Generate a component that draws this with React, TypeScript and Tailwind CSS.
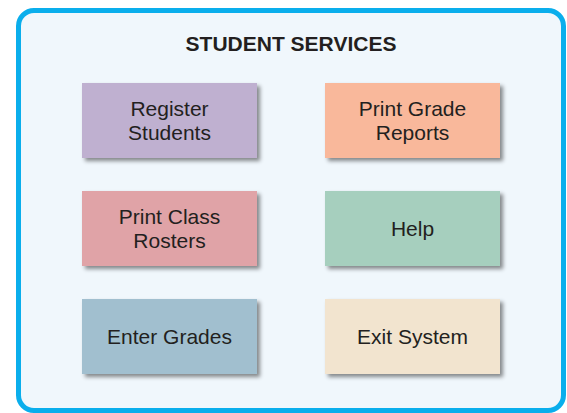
import React from "react";

const buttons: { label: string[]; bg: string }[] = [
  { label: ["Register", "Students"], bg: "bg-[#bfb0d0]" },
  { label: ["Print Grade", "Reports"], bg: "bg-[#f9b89b]" },
  { label: ["Print Class", "Rosters"], bg: "bg-[#e0a3a7]" },
  { label: ["Help"], bg: "bg-[#a6cfbe]" },
  { label: ["Enter Grades"], bg: "bg-[#a1bfcf]" },
  { label: ["Exit System"], bg: "bg-[#f2e4cf]" },
];

export default function App() {
  return (
    <div className="w-[567px] h-[413px] bg-white pt-2 pl-4" style={{ fontFamily: '"Liberation Sans", Arial, sans-serif' }}>
      <div className="w-[550px] h-[405px] rounded-[18px] border-[5px] border-[#0aaeec] bg-[#f0f7fc] flex flex-col items-center pt-[19px]">
        <div className="text-[21px] leading-[24px] font-bold text-[#231f20]">STUDENT SERVICES</div>
        <div className="mt-[27px] grid grid-cols-[175px_175px] auto-rows-[75px] gap-x-[68px] gap-y-[33px]">
          {buttons.map((b) => (
            <div
              key={b.label.join(" ")}
              className={`${b.bg} flex flex-col items-center justify-center text-[21px] leading-[24px] text-[#231f20] shadow-[3px_3px_4px_rgba(0,0,0,0.45)]`}
            >
              {b.label.map((l) => (
                <span key={l}>{l}</span>
              ))}
            </div>
          ))}
        </div>
      </div>
    </div>
  );
}
